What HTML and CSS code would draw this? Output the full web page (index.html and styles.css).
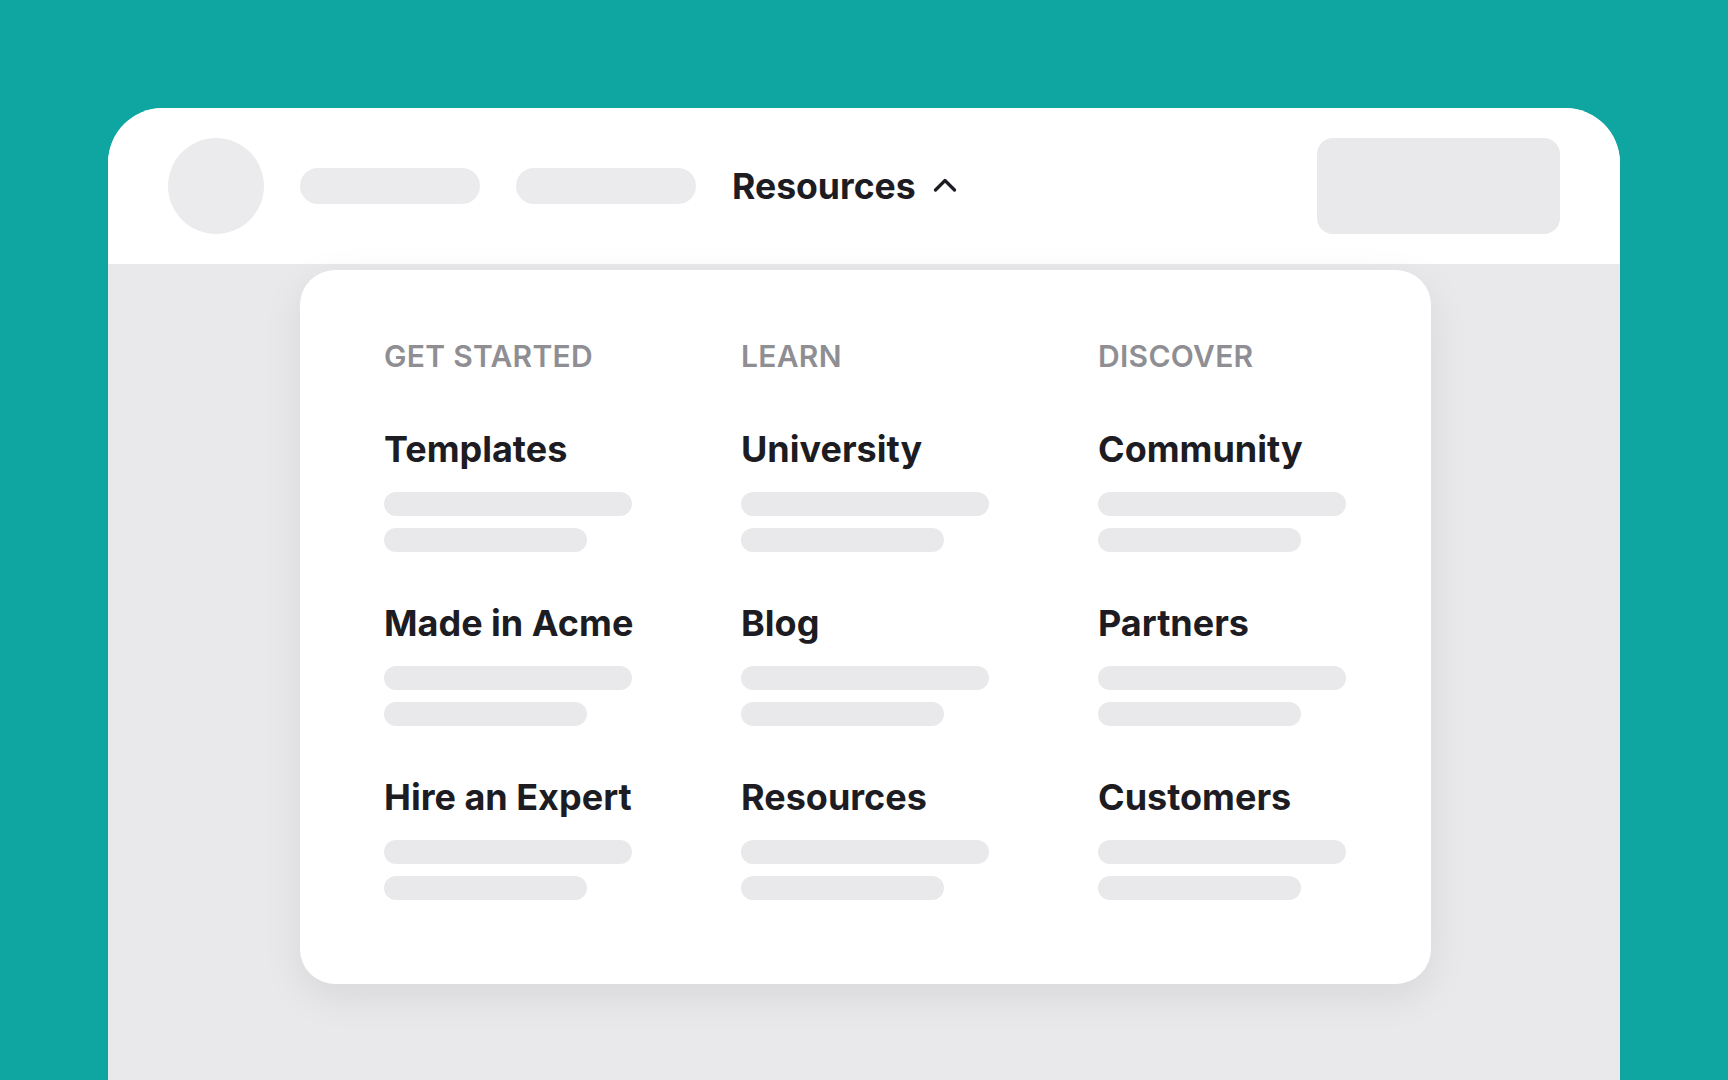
FILE: index.html
```html
<!DOCTYPE html>
<html lang="en">
<head>
    <meta charset="UTF-8">
    <meta name="viewport" content="width=device-width, initial-scale=1.0">
    <title>Resources Menu</title>
    <link rel="stylesheet" href="styles.css">
</head>
<body>

    <div class="frame">
        <div class="header">
            <div class="avatar"></div>
            <div class="pill"></div>
            <div class="pill"></div>
            <div class="nav_item">
                <span>Resources</span>
                <svg class="chevron" width="24" height="14" viewBox="0 0 24 14">
                    <polyline points="2.5,12 12,2.5 21.5,12" fill="none" stroke="#1c1c22" stroke-width="3.2" stroke-linecap="round" stroke-linejoin="round"/>
                </svg>
            </div>
            <div class="button"></div>
        </div>

        <div class="dropdown">
            <div class="column">
                <p class="col_title">GET STARTED</p>
                <div class="items">
                    <div class="item">
                        <h3>Templates</h3>
                        <div class="bar"></div>
                        <div class="bar short"></div>
                    </div>
                    <div class="item">
                        <h3>Made in Acme</h3>
                        <div class="bar"></div>
                        <div class="bar short"></div>
                    </div>
                    <div class="item">
                        <h3>Hire an Expert</h3>
                        <div class="bar"></div>
                        <div class="bar short"></div>
                    </div>
                </div>
            </div>
            <div class="column">
                <p class="col_title">LEARN</p>
                <div class="items">
                    <div class="item">
                        <h3>University</h3>
                        <div class="bar"></div>
                        <div class="bar short"></div>
                    </div>
                    <div class="item">
                        <h3>Blog</h3>
                        <div class="bar"></div>
                        <div class="bar short"></div>
                    </div>
                    <div class="item">
                        <h3>Resources</h3>
                        <div class="bar"></div>
                        <div class="bar short"></div>
                    </div>
                </div>
            </div>
            <div class="column">
                <p class="col_title">DISCOVER</p>
                <div class="items">
                    <div class="item">
                        <h3>Community</h3>
                        <div class="bar"></div>
                        <div class="bar short"></div>
                    </div>
                    <div class="item">
                        <h3>Partners</h3>
                        <div class="bar"></div>
                        <div class="bar short"></div>
                    </div>
                    <div class="item">
                        <h3>Customers</h3>
                        <div class="bar"></div>
                        <div class="bar short"></div>
                    </div>
                </div>
            </div>
        </div>
    </div>

</body>
</html>
```

FILE: styles.css
```css
* {
    margin: 0px;
    padding: 0px;
    box-sizing: border-box;
}

body {
    height: 1080px;
    overflow: hidden;
    background-color: #0fa5a0;
    font-family: Inter, "Noto Sans", sans-serif;
    padding: 108px 108px 0 108px;
}

.frame {
    position: relative;
    height: 1000px;
    background-color: #e9e9eb;
    border-radius: 55px 55px 0 0;
    overflow: hidden;
}

.header {
    height: 156px;
    background-color: white;
    display: flex;
    align-items: center;
    gap: 36px;
    padding: 0 60px;
}

.avatar {
    width: 96px;
    height: 96px;
    border-radius: 50%;
    background-color: #ebebed;
}

.pill {
    width: 180px;
    height: 36px;
    border-radius: 18px;
    background-color: #ebebed;
}

.nav_item {
    display: flex;
    align-items: center;
    gap: 17px;
    font-size: 35.6px;
    font-weight: 700;
    color: #1c1c22;
}

.chevron {
    margin-top: -2px;
}

.button {
    margin-left: auto;
    width: 243px;
    height: 96px;
    border-radius: 16px;
    background-color: #e9e9eb;
}

/* menu panel that opens under the header */
.dropdown {
    position: absolute;
    top: 162px;
    left: 192px;
    width: 1131px;
    background-color: white;
    border-radius: 35px;
    box-shadow: 0 12px 40px rgba(0, 0, 0, 0.08);
    display: grid;
    grid-template-columns: repeat(3, 248px);
    column-gap: 109px;
    padding: 68px 84px 84px 84px;
}

.col_title {
    font-size: 30px;
    line-height: 36px;
    font-weight: 600;
    letter-spacing: 0.3px;
    color: #8e8e93;
    margin-bottom: 53px;
}

.items {
    display: flex;
    flex-direction: column;
    gap: 49px;
}

.item {
    display: flex;
    flex-direction: column;
    gap: 12px;
}

.item h3 {
    font-size: 36px;
    line-height: 44px;
    font-weight: 700;
    color: #1c1c22;
    white-space: nowrap;
    margin-bottom: 9px;
}

.bar {
    width: 248px;
    height: 24px;
    border-radius: 12px;
    background-color: #e9e9eb;
}

.bar.short {
    width: 203px;
}
```
